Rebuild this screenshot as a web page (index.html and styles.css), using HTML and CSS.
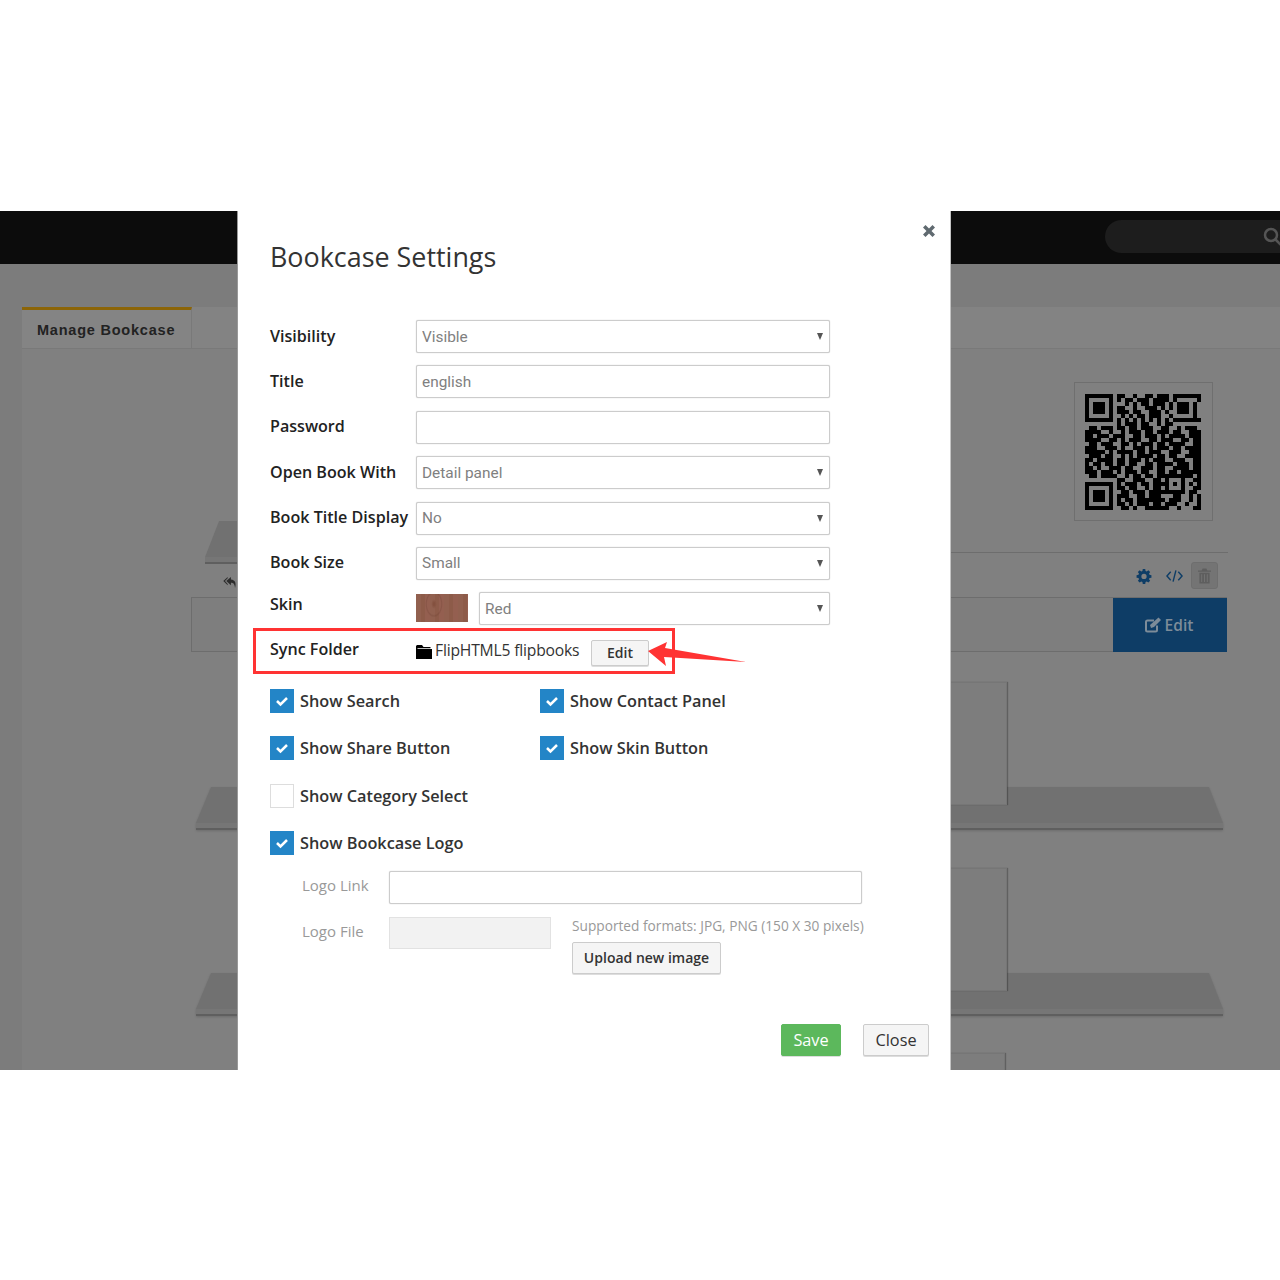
FILE: index.html
```html
<!DOCTYPE html>
<html lang="en">
<head>
<meta charset="utf-8">
<title>Bookcase Settings</title>
<link rel="stylesheet" href="styles.css">
</head>
<body>
<main class="screen">
  <header class="topbar">
    <div class="search">
      <svg class="search-icon" viewBox="0 0 20 20"><circle cx="8" cy="8" r="6"/><path d="M12.5 12.5L18 18"/></svg>
    </div>
  </header>
  <div class="page">
    <div class="panel">
      <nav class="tabs"><div class="tab">Manage Bookcase</div></nav>
      <div class="stub-shelf"><svg viewBox="0 0 40 43" width="40" height="43"><path class="s-top" d="M14 0H40V36H0Z"/><rect class="s-front" y="36" width="40" height="7"/><rect class="s-edge" y="41" width="40" height="2"/></svg></div>
      <svg class="reply" viewBox="0 0 16 14"><path d="M9 1L4 5.500 9 10V7.400c2.600 0 4 1.300 4.400 5.600 1.500-4.500.6-9-4.400-9.300ZM5.500 1L.8 5.500 5.500 10V8.600L2.600 5.500 5.500 2.500Z"/></svg>
      <div class="qr-wrap">
        <div class="qr">
          <svg viewBox="0 0 29 29" width="116" height="116" shape-rendering="crispEdges">
            <path d="M0 .5h7m1 0h2m2 0h1m2 0h2m1 0h3m1 0h7
            M0 1.500h1m5 0h1m1 0h1m1 0h2m1 0h3m1 0h4m1 0h1m5 0h1
            M0 2.500h1m1 0h3m1 0h1m3 0h1m1 0h1m1 0h2m1 0h3m1 0h1m1 0h3m1 0h1
            M0 3.500h1m1 0h3m1 0h1m1 0h2m2 0h1m2 0h3m1 0h1m1 0h1m1 0h3m1 0h1
            M0 4.500h1m1 0h3m1 0h1m1 0h3m1 0h2m2 0h3m1 0h1m2 0h3m1 0h1
            M0 5.500h1m5 0h1m2 0h1m1 0h1m1 0h2m1 0h3m2 0h1m5 0h1
            M0 6.500h7m1 0h1m1 0h1m1 0h1m1 0h1m1 0h1m1 0h1m1 0h1m1 0h7
            M8 7.500h1m1 0h3m1 0h2m2 0h1m1 0h2
            M1 8.500h2m1 0h3m1 0h2m1 0h2m1 0h3m2 0h2m2 0h1m1 0h3
            M0 9.500h4m2 0h1m2 0h1m1 0h3m1 0h2m1 0h3m1 0h2m2 0h3
            M0 10.500h2m1 0h3m1 0h3m2 0h2m1 0h3m1 0h1m1 0h4m1 0h3
            M0 11.500h4m2 0h2m1 0h1m1 0h3m2 0h2m1 0h3m2 0h2m1 0h2
            M1 12.500h2m1 0h3m2 0h2m1 0h1m1 0h3m1 0h2m1 0h4m2 0h2
            M0 13.500h3m2 0h3m1 0h1m2 0h3m1 0h1m1 0h3m1 0h2m1 0h4
            M0 14.500h5m1 0h1m1 0h4m1 0h2m1 0h3m2 0h3m2 0h3
            M1 15.500h3m1 0h2m2 0h1m1 0h1m1 0h4m1 0h2m1 0h2m2 0h4
            M0 16.500h2m1 0h4m1 0h2m1 0h3m1 0h1m1 0h3m2 0h3m2 0h2
            M0 17.500h1m1 0h2m1 0h2m1 0h2m1 0h2m2 0h2m1 0h4m1 0h3m1 0h2
            M0 18.500h2m1 0h1m2 0h3m1 0h2m2 0h3m1 0h2m2 0h4m1 0h2
            M0 19.500h3m1 0h3m1 0h1m1 0h3m1 0h2m2 0h2m1 0h2m1 0h5
            M1 20.500h2m1 0h4m2 0h1m1 0h2m1 0h2m1 0h9m1 0h3
            M8 21.500h2m2 0h3m2 0h2m1 0h1m3 0h1m2 0h2
            M0 22.500h7m1 0h1m1 0h3m1 0h2m1 0h4m1 0h1m1 0h1m1 0h1m1 0h1
            M0 23.500h1m5 0h1m1 0h2m1 0h2m2 0h1m1 0h2m1 0h1m3 0h1m2 0h2
            M0 24.500h1m1 0h3m1 0h1m2 0h2m1 0h3m1 0h9m1 0h2
            M0 25.500h1m1 0h3m1 0h1m1 0h3m2 0h2m1 0h3m3 0h2m2 0h1m1 0h1
            M0 26.500h1m1 0h3m1 0h1m1 0h1m1 0h2m1 0h7m1 0h3m2 0h1m1 0h1
            M0 27.500h1m5 0h1m1 0h2m1 0h1m1 0h3m1 0h2m1 0h3m2 0h1m2 0h1
            M0 28.500h7m2 0h2m1 0h1m2 0h6m2 0h1m3 0h2"/>
          </svg>
        </div>
      </div>
      <div class="rule"></div>
      <div class="actions">
        <svg class="gear" viewBox="0 0 16 16"><path d="M6.600 0h2.800l.4 2.200 1.300.6 1.900-1.300 2 2-1.300 1.900.6 1.300 2.200.4v2.800l-2.200.4-.6 1.300 1.300 1.900-2 2-1.900-1.300-1.300.6-.4 2.200H6.600l-.4-2.200-1.300-.6L3 15.500l-2-2 1.300-1.900-.6-1.300L-.5 9.900V7.100l2.200-.4.6-1.300L1 3.500l2-2 1.900 1.300 1.300-.6ZM8 5.500a3 3 0 1 0 0 6 3 3 0 0 0 0-6Z"/></svg>
        <svg class="code" viewBox="0 0 18 14"><path d="M5 2.500L1 7l4 4.500M13 2.500L17 7l-4 4.500M10.500 1L7.500 13"/></svg>
        <div class="trash"><svg viewBox="0 0 14 16"><path d="M5 0h4l1 2h4v1.500H0V2h4ZM1.500 4.500h11V16h-11ZM3.500 6v8.500h1V6Zm3 0v8.500h1V6Zm3 0v8.500h1V6Z"/></svg></div>
      </div>
      <div class="book-row">
        <a class="row-edit"><svg viewBox="0 0 16 16"><path d="M12 8.500V13a1.500 1.500 0 0 1-1.500 1.500h-8A1.500 1.500 0 0 1 1 13V5a1.500 1.500 0 0 1 1.500-1.500H9" fill="none" stroke-width="2"/><path d="M5 8l1 3 3-1 7-7-2.500-2.500Z" stroke="none"/></svg>Edit</a>
      </div>
      <div class="shelf first">
        <div class="book tall"></div>
        <svg class="shelf-art" viewBox="0 0 1027 43" width="1027" height="43"><path class="s-top" d="M15 0H1013L1027 36H0Z"/><rect class="s-front" y="36" width="1027" height="7"/><rect class="s-edge" y="41" width="1027" height="2"/></svg>
      </div>
      <div class="shelf second">
        <div class="book tall"></div>
        <svg class="shelf-art" viewBox="0 0 1027 43" width="1027" height="43"><path class="s-top" d="M15 0H1013L1027 36H0Z"/><rect class="s-front" y="36" width="1027" height="7"/><rect class="s-edge" y="41" width="1027" height="2"/></svg>
      </div>
      <div class="book-third"></div>
    </div>
  </div>

  <section class="modal">
    <svg class="close-x" viewBox="0 0 14 14"><path d="M1 3.500L3.500 1 7 4.500 10.500 1 13 3.500 9.500 7 13 10.500 10.500 13 7 9.500 3.500 13 1 10.500 4.500 7Z"/></svg>
    <h1 class="modal-title">Bookcase Settings</h1>
    <form class="form">
      <div class="row"><label class="lbl">Visibility</label><div class="sel"><select><option>Visible</option></select></div></div>
      <div class="row"><label class="lbl">Title</label><input class="field" value="english"></div>
      <div class="row"><label class="lbl">Password</label><input class="field"></div>
      <div class="row"><label class="lbl">Open Book With</label><div class="sel"><select><option>Detail panel</option></select></div></div>
      <div class="row"><label class="lbl">Book Title Display</label><div class="sel"><select><option>No</option></select></div></div>
      <div class="row"><label class="lbl">Book Size</label><div class="sel"><select><option>Small</option></select></div></div>
      <div class="row skin-row"><label class="lbl">Skin</label><div class="wood"></div><div class="sel short"><select><option>Red</option></select></div></div>
      <div class="sync">
        <label class="lbl">Sync Folder</label>
        <svg class="folder" viewBox="0 0 16 14"><path d="M1 0h5l1.500 2H14.500v1.200H1.500V4H16v10H0V1Z"/></svg>
        <span class="folder-name">FlipHTML5 flipbooks</span>
        <button type="button" class="btn sync-edit">Edit</button>
        <div class="callout"></div>
        <svg class="arrow" viewBox="0 0 100 26"><path d="M0 9L19 0 17 6 98 20 16 15 18 24Z"/></svg>
      </div>
      <div class="checks">
        <div class="chk"><span class="box on"><svg viewBox="0 0 24 24"><path d="M7 12l3.500 3.500L17 9"/></svg></span>Show Search</div>
        <div class="chk"><span class="box on"><svg viewBox="0 0 24 24"><path d="M7 12l3.500 3.500L17 9"/></svg></span>Show Contact Panel</div>
        <div class="chk"><span class="box on"><svg viewBox="0 0 24 24"><path d="M7 12l3.500 3.500L17 9"/></svg></span>Show Share Button</div>
        <div class="chk"><span class="box on"><svg viewBox="0 0 24 24"><path d="M7 12l3.500 3.500L17 9"/></svg></span>Show Skin Button</div>
        <div class="chk wide"><span class="box"></span>Show Category Select</div>
        <div class="chk wide"><span class="box on"><svg viewBox="0 0 24 24"><path d="M7 12l3.500 3.500L17 9"/></svg></span>Show Bookcase Logo</div>
      </div>
      <div class="logo-link"><label class="sub">Logo Link</label><input class="field link"></div>
      <div class="logo-file">
        <label class="sub file-lbl">Logo File</label>
        <div class="file-box"></div>
        <div class="file-side">
          <p class="hint">Supported formats: JPG, PNG (150 X 30 pixels)</p>
          <button type="button" class="btn upload">Upload new image</button>
        </div>
      </div>
      <div class="foot">
        <button type="button" class="btn save">Save</button>
        <button type="button" class="btn close">Close</button>
      </div>
    </form>
  </section>
</main>
</body>
</html>
```
FILE: styles.css
```css
* { box-sizing: border-box; }
html, body { margin: 0; padding: 0; background: #fff; }
body { padding-top: 211px; height: 1280px; font-family: "Open Sans", sans-serif; }

.screen { position: relative; height: 859px; overflow: hidden; background: #7c7c7c; display: flex; flex-direction: column; }

.topbar { height: 53px; flex: none; background: #0c0c0c; display: flex; justify-content: flex-end; padding-top: 9px; }
.search { width: 175px; height: 33px; border-radius: 17px 0 0 17px; background: #1d1d1d; display: flex; align-items: center; justify-content: flex-end; }
.search-icon { width: 20px; height: 20px; fill: none; stroke: #555; stroke-width: 2.500; margin-right: -3px; }

.page { flex: 1; padding: 43px 0 0 22px; }
.panel { position: relative; height: 100%; background: #808080; padding-left: 169px; }

.tabs { height: 42px; margin-left: -169px; background: #838383; border-bottom: 1px solid #797979; }
.tab { width: 170px; height: 41px; border-top: 3px solid #8c6508; border-right: 1px solid #797979; background: #848484; padding: 8px 0 0 15px; font: bold 14.500px/24px "Liberation Sans", sans-serif; letter-spacing: .78px; color: #222; }

.stub-shelf { position: absolute; left: 183px; top: 214px; line-height: 0; }
.reply { position: absolute; left: 200px; top: 269px; width: 16px; height: 13px; fill: #2c2c2c; }

.qr-wrap { display: flex; justify-content: flex-end; padding: 33px 67px 0 0; }
.qr { width: 139px; height: 139px; border: 1px solid #6f6f6f; display: flex; align-items: center; justify-content: center; padding-right: 1px; }
.qr path { fill: none; stroke: #000; stroke-width: 1; }

.rule { height: 1px; width: 937px; margin: 31px 0 0 100px; background: #6d6d6d; }

.actions { width: 1036px; height: 27px; margin-top: 9px; display: flex; align-items: center; justify-content: flex-end; padding-right: 9px; }
.gear { width: 14px; height: 14px; fill: #0e3d66; overflow: visible; margin-right: -1px; }
.code { width: 17px; height: 14px; margin-left: 16px; fill: none; stroke: #0e3d66; stroke-width: 1.500; }
.trash { width: 27px; height: 27px; margin-left: 8px; border-radius: 3px; background: #747474; border: 1px solid #6e6e6e; display: flex; align-items: center; justify-content: center; }
.trash svg { width: 13px; height: 16px; fill: #5e5e5e; }

.book-row { width: 1036px; height: 55px; margin-top: 8px; border-top: 1px solid #6d6d6d; border-bottom: 1px solid #6d6d6d; border-left: 1px solid #6d6d6d; background: #7e7e7e; display: flex; justify-content: flex-end; }
.row-edit { width: 114px; margin: 0 0 -1px 0; padding-right: 2px; background: #0e3d66; color: #7d8c99; display: flex; align-items: center; justify-content: center; gap: 4px; font-size: 15.500px; font-weight: 600; }
.row-edit svg { width: 16px; height: 16px; fill: #7d8c99; stroke: #7d8c99; }

.shelf { position: relative; margin-left: 5px; width: 1027px; line-height: 0; }
.shelf.first { margin-top: 135px; }
.shelf.second { margin-top: 143px; }
.shelf-art { display: block; filter: drop-shadow(0 1px 1px rgba(0,0,0,.15)); }
.s-top { fill: #717171; }
.s-front { fill: #767676; }
.s-edge { fill: #5f5f5f; }
.book { position: absolute; right: 216px; bottom: 25px; width: 500px; height: 123px; background: #7d7d7d; border: 1px solid #767676; box-shadow: 1px 0 1px rgba(0,0,0,.25); z-index: 1; }
.book-third { width: 714px; height: 20px; margin: 37px 0 0 100px; background: #7d7d7d; border: 1px solid #767676; box-shadow: 1px 0 1px rgba(0,0,0,.25); }

.modal { position: absolute; z-index: 2; left: 238px; top: 0; width: 712px; height: 859px; background: #fff; padding: 0 32px; box-shadow: 1px 0 0 #c4c4c4, -1px 0 0 #999; }
.close-x { position: absolute; right: 14px; top: 13px; width: 14px; height: 14px; fill: #606a70; }
.modal-title { margin: 0; padding-top: 27px; font-weight: 400; font-size: 26.900px; line-height: 38px; color: #333; }

.form { margin-top: 44px; }
.row { display: flex; align-items: center; height: 33px; margin-bottom: 12.400px; }
.lbl { flex: none; width: 146px; font-size: 16.100px; font-weight: 600; color: #222; line-height: 22px; margin-top: -2px; }
.field, .sel select { font: 15.400px "Roboto", sans-serif; color: #808080; height: 33px; border: 1px solid #ccc; border-radius: 2px; background: #fff; box-shadow: 0 0 1px #bbb; padding: 0 5px; outline: 0; }
.field { width: 414px; }
.sel { position: relative; width: 414px; }
.sel select { width: 100%; appearance: none; -webkit-appearance: none; display: block; }
.sel::after { content: ""; position: absolute; right: 7px; top: 13px; border-left: 3.500px solid transparent; border-right: 3.500px solid transparent; border-top: 7px solid #555; }
.sel.short { width: 351px; margin-left: 11px; }
.wood { flex: none; width: 52px; height: 28px; margin-top: -2px; background:
  radial-gradient(ellipse 4px 7px at 18px 10px, #84513f 20%, transparent 70%),
  radial-gradient(ellipse 11px 17px at 18px 10px, transparent 60%, rgba(70,30,20,.14) 70%, transparent 80%),
  repeating-linear-gradient(90deg, #91604f 0 5px, #8d5b49 5px 9px, #945f50 9px 14px); }
.skin-row .lbl { margin-top: -10px; }

.sync { position: relative; display: flex; align-items: center; height: 26px; margin-top: 15px; }
.folder { flex: none; width: 16px; height: 14px; margin: -3px 3px 0 0; fill: #000; }
.folder-name { font-size: 15.700px; color: #333; white-space: nowrap; width: 156px; letter-spacing: -.2px; margin-top: -7px; }
.sync .lbl { margin-top: -8px; }
.btn { font-family: "Open Sans", sans-serif; font-weight: 600; color: #333; background: #f5f5f5; border: 1px solid #ccc; border-radius: 2px; box-shadow: 0 1px 0 #ddd; padding: 0; }
.sync-edit { width: 58px; height: 26px; font-size: 14px; line-height: 22px; }
.callout { position: absolute; left: -17px; top: -12px; width: 422px; height: 46px; border: 3px solid #f33; pointer-events: none; }
.arrow { position: absolute; left: 378px; top: 2px; width: 100px; height: 26px; fill: #f33; }

.checks { display: grid; grid-template-columns: 270px 1fr; grid-auto-rows: 47.400px; margin-top: 11px; }
.chk { display: flex; align-items: center; font-size: 16.300px; font-weight: 600; color: #333; height: 47.400px; }
.chk.wide { grid-column: 1 / -1; }
.box { flex: none; width: 24px; height: 24px; margin-right: 6px; background: #fff; border: 1px solid #ddd; }
.box.on { background: #2385c7; border: 0; }
.box svg { display: block; width: 24px; height: 24px; fill: none; stroke: #fff; stroke-width: 2.500; }

.sub { flex: none; font-size: 15px; color: #999; }
.logo-link { display: flex; align-items: center; margin: 4px 0 0 32px; }
.logo-link .sub { width: 87px; margin-top: -4px; }
.field.link { width: 473px; }
.logo-file { display: flex; margin: 13px 0 0 32px; }
.file-lbl { width: 87px; line-height: 28px; }
.file-box { flex: none; width: 162px; height: 32px; background: #f2f2f2; border: 1px solid #e2e2e2; }
.file-side { margin-left: 21px; }
.hint { margin: 0; font-size: 13.700px; line-height: 18px; color: #999; white-space: nowrap; }
.upload { display: block; width: 149px; height: 32px; margin-top: 7px; font-size: 14px; }

.foot { display: flex; justify-content: flex-end; margin: 50px -11px 0 0; gap: 22px; padding-right: 0; }
.save, .close { height: 32px; font-size: 16.300px; font-weight: 400; line-height: 26px; }
.save { width: 60px; background: #5cb85c; border-color: #5cb85c; color: #fff; }
.close { width: 66px; }
```
